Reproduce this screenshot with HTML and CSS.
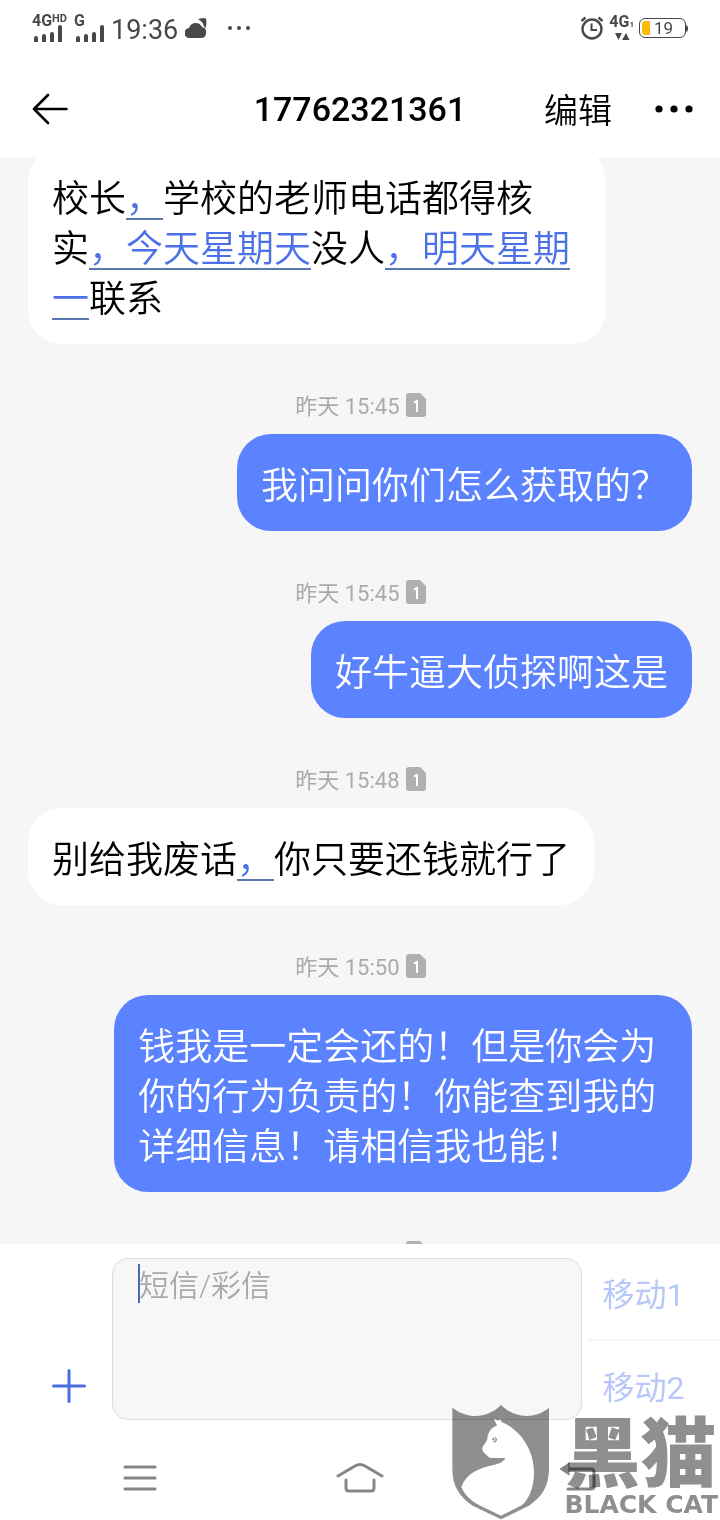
FILE: index.html
```html
<!DOCTYPE html>
<html lang="zh-CN">
<head>
<meta charset="utf-8">
<meta name="viewport" content="width=device-width, initial-scale=1">
<title>17762321361</title>
<link rel="stylesheet" href="styles.css">
</head>
<body>
<svg class="defs" width="0" height="0" aria-hidden="true">
  <symbol id="sim" viewBox="0 0 20 24">
    <path d="M3 0h11l6 6v15a3 3 0 0 1-3 3H3a3 3 0 0 1-3-3V3a3 3 0 0 1 3-3z" fill="#b0b0b0"/>
    <path d="M8 9.500l3-1.500v11" fill="none" stroke="#fff" stroke-width="2"/>
  </symbol>
  <symbol id="bars" viewBox="0 0 30 18">
    <path d="M4 17v-3M12 17v-5M20 17v-7M28 17V3" stroke="#484848" stroke-width="4" stroke-linecap="round" fill="none"/>
  </symbol>
</svg>

<div class="status">
  <div class="status-side">
    <div class="signal"><span class="net">4G<small>HD</small></span><svg class="bars"><use href="#bars"/></svg></div>
    <div class="signal"><span class="net">G</span><svg class="bars"><use href="#bars"/></svg></div>
    <span class="clock">19:36</span>
    <svg class="cloud" viewBox="0 0 22 20"><path d="M5 20a5 5 0 0 1-1-10A7 7 0 0 1 17 9 5.600 5.600 0 0 1 16 20z" fill="#484848"/><path d="M13 1.500C15 0 18 0 21 .500c.500 4 1 7-1 10-.500-2-1.500-3-1.500-3C18 4.500 16 2.500 13 1.500z" fill="#484848"/></svg>
    <svg class="more-small" viewBox="0 0 22 4"><circle cx="2" cy="2" r="2"/><circle cx="11" cy="2" r="2"/><circle cx="20" cy="2" r="2"/></svg>
  </div>
  <div class="status-side right">
    <svg class="alarm" viewBox="0 0 24 24" fill="none" stroke="#484848"><circle cx="12" cy="13" r="9.500" stroke-width="2.400"/><path d="M11.500 7.500V14H17" stroke-width="2"/><path d="M1.500 5l4-3.500M22.500 5l-4-3.500" stroke-width="2.400"/></svg>
    <div class="data"><span class="net">4G<sub>1</sub></span><svg class="arrows" viewBox="0 0 16 8"><path d="M1 1h7L4.500 8zM8 8h7.500L12 1z" fill="#484848"/></svg></div>
    <div class="battery"><span class="charge"></span>19</div>
  </div>
</div>

<header class="header">
  <button class="icon-btn" aria-label="返回"><svg class="back" viewBox="0 0 36 32"><path d="M34.500 16H2M16 2L2 16l14 14" fill="none" stroke="#000" stroke-width="2.600" stroke-linecap="round" stroke-linejoin="round"/></svg></button>
  <h1 class="title">17762321361</h1>
  <div class="actions">
    <button class="edit">编辑</button>
    <button class="icon-btn" aria-label="更多"><svg class="more" viewBox="0 0 38 8"><circle cx="4" cy="4" r="3.600"/><circle cx="19" cy="4" r="3.600"/><circle cx="34" cy="4" r="3.600"/></svg></button>
  </div>
</header>

<main class="chat">
  <p class="bubble in first">校长<a href="#">，</a>学校的老师电话都得核实<a href="#">，今天星期天</a>没人<a href="#">，明天星期一</a>联系</p>
  <div class="meta"><time>昨天 15:45</time><svg class="sim"><use href="#sim"/></svg></div>
  <p class="bubble out">我问问你们怎么获取的？</p>
  <div class="meta"><time>昨天 15:45</time><svg class="sim"><use href="#sim"/></svg></div>
  <p class="bubble out">好牛逼大侦探啊这是</p>
  <div class="meta"><time>昨天 15:48</time><svg class="sim"><use href="#sim"/></svg></div>
  <p class="bubble in">别给我废话<a href="#">，</a>你只要还钱就行了</p>
  <div class="meta"><time>昨天 15:50</time><svg class="sim"><use href="#sim"/></svg></div>
  <p class="bubble out">钱我是一定会还的！但是你会为你的行为负责的！你能查到我的详细信息！请相信我也能！</p>
  <div class="meta"><svg class="sim"><use href="#sim"/></svg></div>
</main>

<form class="composer">
  <button type="button" class="add" aria-label="添加"><svg class="plus" viewBox="0 0 34 34"><path d="M17 1.500v31M1.500 17h31" stroke="#4b6fe0" stroke-width="3" stroke-linecap="round"/></svg></button>
  <div class="field">
    <textarea class="input" aria-label="短信/彩信" placeholder="短信/彩信"></textarea>
    <span class="caret"></span>
  </div>
  <div class="send">
    <button type="button" class="send-btn">移动1</button>
    <button type="button" class="send-btn">移动2</button>
  </div>
</form>

<nav class="nav">
  <button class="nav-btn" aria-label="菜单"><svg class="nav-icon" viewBox="0 0 48 32"><path d="M9 5h30M9 16h30M9 27h30"/></svg></button>
  <button class="nav-btn" aria-label="主页"><svg class="nav-icon" viewBox="0 0 48 32"><path d="M2 14L19 4q5-3 10 0l17 10M10 18v8q0 3 3 3h22q3 0 3-3v-8"/></svg></button>
  <button class="nav-btn" aria-label="后退"><svg class="nav-icon" viewBox="0 0 48 32"><path d="M10 7h25q3 0 3 3v14q0 3-3 3H12"/><path d="M6 7l6-4v8z" fill="#777"/></svg></button>
</nav>

<div class="watermark">
  <svg class="shield" viewBox="0 0 330 360">
    <path fill="#908e8f" d="M19 23C60 55 120 60 165 15c45 45 105 40 144 9v180c0 55-20 85-60 113l-84 41-85-41C40 289 19 260 19 204z"/>
    <path fill="#fff" d="M143 56l16 6 3-6 5 10c57 24 97 84 97 151 0 40-12 74-29 91-5 6-9 9-14 11l-56 28-62-30c-30-15-48-34-57-56 14-41 54-57 96-66 18-4 31-9 36-21h-37c-5 1-10 0-14-4-8-7-17-13-18-22-1-10 11-19 15-31 2-22 11-32 29-41z"/>
    <path d="M137 118l9-7-2 11zM147 111q11 6 3 14-6 4-10 1 12-3 7-15z" fill="#908e8f"/>
  </svg>
  <div class="brand"><span class="brand-cn">黑猫</span><span class="brand-en">BLACK CAT</span></div>
</div>
</body>
</html>
```

FILE: styles.css
```css
* { box-sizing: border-box; }

body {
  margin: 0;
  height: 100vh;
  position: relative;
  display: flex;
  flex-direction: column;
  overflow: hidden;
  background: #fff;
  color: #000;
  font-family: Roboto, "Noto Sans CJK SC", sans-serif;
}

button {
  border: 0;
  padding: 0;
  background: none;
  color: inherit;
  font: inherit;
}

svg { display: block; }
.defs { position: absolute; }

.status {
  display: flex;
  justify-content: space-between;
  height: 60px;
  padding: 0 32px 4px;
  color: #484848;
}
.status-side { display: flex; align-items: center; gap: 7px; }
.status-side.right { gap: 5px; }
.signal { display: flex; flex-direction: column; }
.net { font-size: 16px; line-height: 12px; font-weight: 700; white-space: nowrap; }
.net small { font-size: 11px; vertical-align: 4px; line-height: 8px; }
.net sub { font-size: 8px; line-height: 8px; vertical-align: 0; }
.bars { width: 30px; height: 18px; margin-top: -3px; }
.clock { font-size: 27px; line-height: 32px; padding-top: 4px; }
.cloud { width: 22px; height: 20px; }
.more-small { width: 22px; height: 4px; margin-left: 14px; fill: #484848; }
.alarm { width: 24px; height: 24px; }
.data { display: flex; flex-direction: column; align-items: center; gap: 3px; }
.arrows { width: 16px; height: 8px; }
.battery {
  position: relative;
  display: flex;
  align-items: center;
  gap: 4px;
  width: 47px;
  height: 20px;
  margin-right: 2px;
  padding: 0 2px;
  border: 1px solid #484848;
  border-radius: 6px;
  font-size: 17px;
}
.battery::after {
  content: "";
  position: absolute;
  left: 100%;
  top: 6px;
  width: 3px;
  height: 7px;
  border-radius: 0 4px 4px 0;
  background: #484848;
}
.charge { width: 8px; height: 14px; border-radius: 3px 0 0 3px; background: #fbb90b; }

.header {
  display: grid;
  grid-template-columns: 1fr auto 1fr;
  align-items: center;
  height: 98px;
  padding: 0 27px;
}
.back { width: 36px; height: 32px; margin-left: 5px; }
.title { margin: 0; font-size: 34px; line-height: 48px; font-weight: 500; }
.actions { display: flex; align-items: center; justify-content: flex-end; gap: 43px; }
.edit { font-size: 34px; line-height: 48px; font-weight: 350; padding-top: 4px; }
.more { width: 38px; height: 8px; }

.chat {
  flex: 1;
  min-height: 0;
  display: flex;
  flex-direction: column;
  overflow: hidden;
  padding: 0 28px;
  background: #f6f6f6;
}
.bubble {
  flex: none;
  max-width: 87%;
  margin: 0;
  padding: 28px 24px 19px;
  border-radius: 34px;
  font-size: 37px;
  line-height: 50px;
  font-weight: 350;
}
.in { align-self: flex-start; background: #fff; }
.out { align-self: flex-end; background: #5b82ff; color: #fff; }
.first { margin-top: -11px; }
.bubble a {
  color: #4b70e8;
  text-decoration: underline 2px #5a78b0;
  text-underline-offset: 6px;
  text-decoration-skip-ink: none;
}
.meta {
  flex: none;
  align-self: center;
  display: flex;
  align-items: center;
  justify-content: flex-end;
  gap: 6px;
  min-width: 131px;
  height: 24px;
  margin: 49px 0 17px;
  color: #aaa;
  font-size: 22px;
  line-height: 24px;
}
.meta time { padding-top: 3px; }
.sim { width: 20px; height: 24px; }

.composer {
  display: flex;
  padding: 14px 0 15px 52px;
}
.add { align-self: flex-end; margin: 0 26px 17px 0; }
.plus { width: 34px; height: 34px; }
.field { position: relative; flex: 1; display: flex; }
.input {
  width: 100%;
  height: 162px;
  padding: 5px 26px;
  border: 1px solid #dcdcdc;
  border-radius: 16px;
  background: #f7f7f7;
  font: 350 30px/44px Roboto, "Noto Sans CJK SC", sans-serif;
  resize: none;
  outline: 0;
}
.input::placeholder { color: #a8a8a8; }
.caret { position: absolute; left: 26px; top: 6px; width: 2px; height: 39px; background: #4a68b8; }
.send { display: flex; flex-direction: column; width: 131px; margin-left: 7px; }
.send-btn {
  flex: none;
  height: 81px;
  padding: 0 22px 7px 0;
  color: #b7c7fa;
  font-size: 32px;
  line-height: 40px;
}
.send-btn + .send-btn { border-top: 2px solid #f5f5f5; padding: 15px 22px 0 0; }

.nav {
  display: grid;
  grid-template-columns: repeat(3, 1fr);
  height: 85px;
  padding: 0 30px;
}
.nav-btn { display: flex; align-items: center; justify-content: center; }
.nav-icon { width: 48px; height: 32px; fill: none; stroke: #858585; stroke-width: 3; stroke-linecap: round; }

.watermark {
  position: absolute;
  right: 2px;
  bottom: 0;
  display: flex;
  align-items: flex-end;
  gap: 8px;
  color: #908e8f;
  pointer-events: none;
  mix-blend-mode: multiply;
}
.shield { width: 110px; height: 120px; }
.brand { display: flex; flex-direction: column; align-items: flex-start; }
.brand-cn { margin-bottom: 4px; font: 900 76px/76px "Noto Sans CJK SC", sans-serif; }
.brand-en { font: 700 25px/30px "DejaVu Sans", sans-serif; white-space: nowrap; }
```
